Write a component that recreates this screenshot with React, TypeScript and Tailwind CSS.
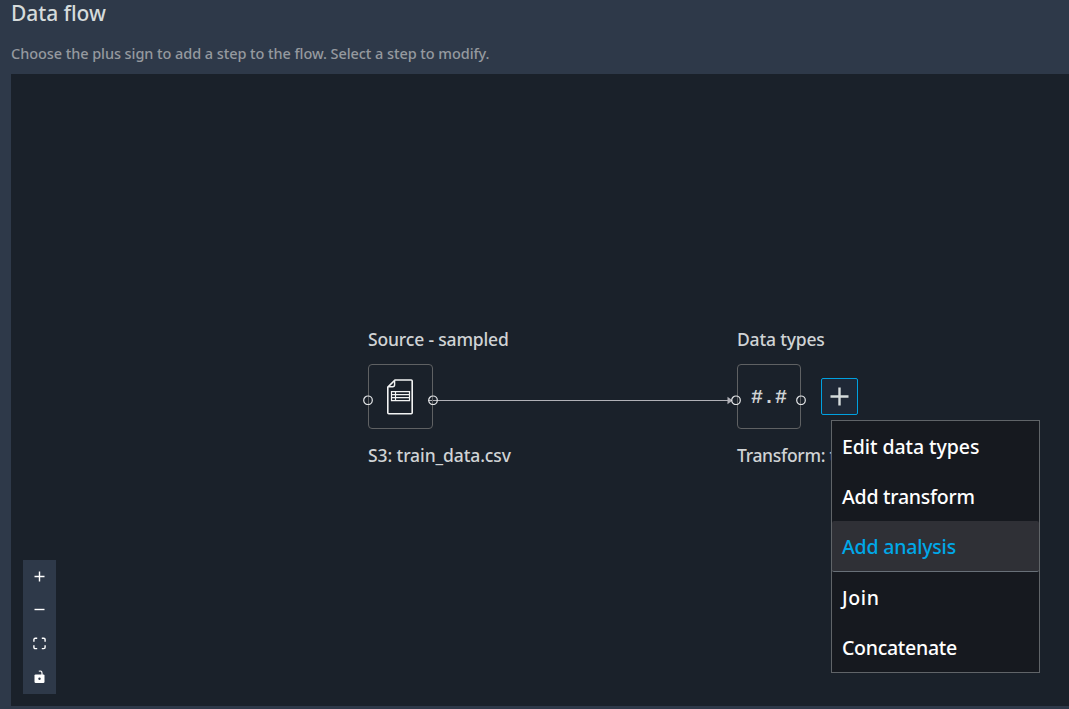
import type { ReactNode } from "react";

function Port({ className }: { className: string }) {
  return (
    <svg className={`absolute size-[10px] ${className}`} viewBox="0 0 10 10" fill="none">
      <circle cx="5" cy="5.3" r="4.3" stroke="#e4e6e8" strokeWidth="1.2" />
    </svg>
  );
}

function SheetIcon() {
  return (
    <svg className="mr-[2px]" width="26" height="36" viewBox="0 0 26 36" fill="none" stroke="#f2f3f3">
      <path d="M8 1H24.2Q25.2 1 25.2 2V33.8Q25.2 34.8 24.2 34.8H1.8Q.8 34.8 .8 33.8V8.2L8 1Z" strokeWidth="1.6" />
      <path d="M7.6 1.4V5.8Q7.6 7.8 5.6 7.8H1.4" strokeWidth="1.4" />
      <path d="M4.5 12.7H22.5V21.7H4.5ZM4.5 15.7H22.5M4.5 18.7H22.5M8.5 12.7V21.7" strokeWidth="1.2" />
    </svg>
  );
}

function ControlButton({ label, children }: { label: string; children: ReactNode }) {
  return (
    <button aria-label={label} className="flex flex-1 items-center justify-center">
      <svg width="13" height="14" viewBox="0 0 13 14" fill="none" stroke="#fff" strokeWidth="1.4">
        {children}
      </svg>
    </button>
  );
}

const menuItems = [
  { label: "Edit data types", style: "h-[50px] tracking-[-0.06px]" },
  { label: "Add transform", style: "h-[50px] tracking-[-0.24px]" },
  {
    label: "Add analysis",
    style: "h-[51px] rounded-[2px] border-b border-[#687078] bg-[#2f3036] text-[#00a8e8] tracking-[-0.2px]",
  },
  { label: "Join", style: "h-[50px] tracking-[0.6px]" },
  { label: "Concatenate", style: "h-[50px] tracking-[-0.28px]" },
];

export default function App() {
  return (
    <div className="flex h-[709px] w-[1069px] flex-col overflow-hidden bg-[#2e3949] pb-[3px] pl-[11px] font-['Noto_Sans',sans-serif] font-medium">
      <header className="h-[74px] shrink-0 whitespace-nowrap">
        <h1 className="h-[28px] text-[21px] leading-[27px] tracking-[-0.06px] text-[#d5dbdb]">Data flow</h1>
        <p className="mt-[14px] text-[14.5px] leading-[22px] tracking-[-0.07px] text-[#95999f]">
          Choose the plus sign to add a step to the flow. Select a step to modify.
        </p>
      </header>

      <main className="relative flex-1 overflow-hidden bg-[#1a212a] text-[17.5px] leading-[24px] whitespace-nowrap text-[#d0d3d5]">
        <svg className="absolute top-[321px] left-[417px]" width="312" height="10" viewBox="0 0 312 10">
          <path d="M0 5.5H302" stroke="#b1b1b7" strokeWidth="1.2" />
          <path d="M299.5 1.8L304.5 5.5L299.5 9.2Z" fill="#b1b1b7" />
        </svg>

        <section className="absolute top-[253px] left-[357px] flex flex-col">
          <div className="tracking-[-0.16px]">Source - sampled</div>
          <div className="relative mt-[13px] flex h-[65px] w-[65px] items-center justify-center rounded-[4px] border border-[#5f6163]">
            <Port className="top-[30px] -left-[6px]" />
            <SheetIcon />
            <Port className="top-[30px] left-[59px]" />
          </div>
          <div className="mt-[14px] tracking-[-0.1px]">S3: train_data.csv</div>
        </section>

        <section className="absolute top-[253px] left-[726px] flex flex-col">
          <div className="tracking-[-0.18px]">Data types</div>
          <div className="relative mt-[13px] flex h-[65px] w-[64px] items-center justify-center rounded-[4px] border border-[#5f6163]">
            <Port className="top-[30px] -left-[7px]" />
            <span className="pt-[3px] font-['Liberation_Mono',monospace] text-[20px] leading-[24px] font-bold">#.#</span>
            <Port className="top-[30px] left-[58px]" />
          </div>
          <div className="mt-[14px] tracking-[-0.3px]">Transform: t</div>
        </section>

        <button
          aria-label="Add step"
          className="absolute top-[304px] left-[810px] flex size-[37px] items-center justify-center rounded-[2px] border border-[#00a1e0] bg-[#1f2836]"
        >
          <svg width="19" height="19" viewBox="0 0 19 19">
            <path d="M9.5 .5V18.5M.5 9.5H18.5" stroke="#d5dbdb" strokeWidth="2.4" />
          </svg>
        </button>

        <nav className="absolute top-[346px] left-[820px] flex w-[209px] flex-col border border-[#606468] bg-[#16191f] text-[19.5px] text-white">
          {menuItems.map(({ label, style }) => (
            <button key={label} className={`flex items-center pt-px pl-[10px] text-left ${style}`}>
              {label}
            </button>
          ))}
        </nav>

        <div className="absolute top-[486px] left-[12px] flex h-[134px] w-[33px] flex-col bg-[#2e3949]">
          <ControlButton label="Zoom in">
            <path d="M6.5 1.5V11.5M1.5 6.5H11.5" />
          </ControlButton>
          <ControlButton label="Zoom out">
            <path d="M1.5 6.5H11.5" />
          </ControlButton>
          <ControlButton label="Fit view">
            <path d="M.9 4.8V2.6Q.9 1.3 2.2 1.3H4.2M8.8 1.3H10.8Q12.1 1.3 12.1 2.6V4.8M12.1 8.2V10.3Q12.1 11.6 10.8 11.6H8.8M4.2 11.6H2.2Q.9 11.6 .9 10.3V8.2" />
          </ControlButton>
          <ControlButton label="Unlock">
            <path d="M5.8 1.2Q8.8 .3 9 3V5" strokeWidth="1.2" />
            <rect x="1.5" y="4.4" width="10" height="8.6" rx="1.2" fill="#fff" stroke="none" />
            <circle cx="6.5" cy="8.7" r="1.2" fill="#2e3949" stroke="none" />
          </ControlButton>
        </div>
      </main>
    </div>
  );
}
